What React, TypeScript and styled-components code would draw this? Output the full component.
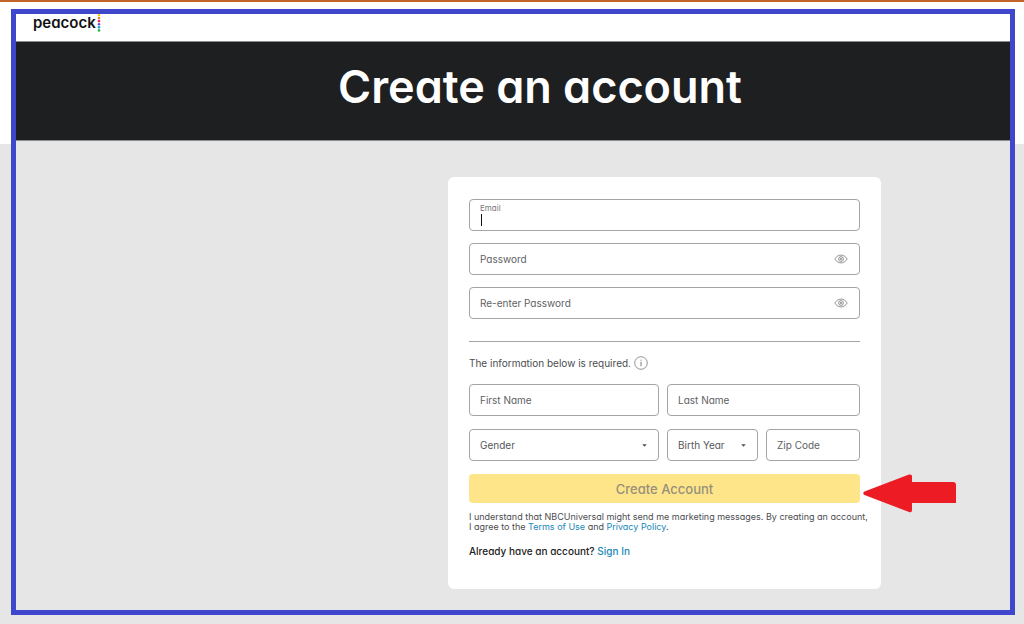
import React from "react";
import styled, { createGlobalStyle } from "styled-components";

const GlobalStyle = createGlobalStyle`
  *, *::before, *::after { box-sizing: border-box; }
  body {
    margin: 0;
    background: #e6e6e6;
    font-family: Inter, "Liberation Sans", sans-serif;
    font-feature-settings: "cv11" 1;
    color: #4c4d50;
  }
  input, select, button {
    font: inherit;
    font-feature-settings: inherit;
  }
`;

const Page = styled.div`
  min-height: 100vh;
  display: flex;
  flex-direction: column;
  border-top: 2px solid #c0642c;
  padding: 7px 9px 9px 11px;
  background: linear-gradient(#fff 142px, #e6e6e6 142px);
`;

const Frame = styled.div`
  flex: 1;
  display: flex;
  flex-direction: column;
  border: 5px solid #3f48cc;
  background: #e6e6e6;
`;

const Header = styled.header`
  height: 28px;
  display: flex;
  align-items: flex-start;
  gap: 1px;
  padding-left: 17px;
  background: #fff;
  border-bottom: 1px solid #8b8b8b;
`;

const Brand = styled.span`
  font-size: 15px;
  line-height: 18px;
  font-weight: 600;
  color: #111;
`;

const Banner = styled.div`
  height: 99px;
  display: flex;
  justify-content: center;
  padding: 16px 0 0 54px;
  background: #1e1f21;
  border-bottom: 1px solid #8b8b8b;
`;

const Title = styled.h1`
  margin: 0;
  font-size: 45px;
  line-height: 58px;
  font-weight: 600;
  color: #fff;
  white-space: nowrap;
`;

const Main = styled.main`
  flex: 1;
  display: flex;
  justify-content: flex-end;
  align-items: flex-start;
  padding: 36px 129px 21px 16px;
`;

const Card = styled.form`
  width: 433px;
  padding: 22px 21px 31px;
  border-radius: 6px;
  background: #fff;
`;

const Stack = styled.div`
  display: flex;
  flex-direction: column;
  gap: 12px;
`;

const Row = styled.div<{ $columns: string }>`
  display: grid;
  grid-template-columns: ${(p) => p.$columns};
  gap: 8px;
  margin-bottom: 13px;
`;

const Field = styled.div`
  position: relative;
  display: flex;
  align-items: center;
  min-width: 0;
  height: 32px;
  border: 1px solid #a3a4a6;
  border-radius: 4px;
  background: #fff;
`;

const Input = styled.input`
  flex: 1;
  min-width: 0;
  height: 100%;
  padding: 0 10px;
  border: 0;
  outline: 0;
  background: transparent;
  font-size: 10px;
  color: #222;
  &::placeholder { color: #606164; opacity: 1; }
`;

const Select = styled.select`
  flex: 1;
  min-width: 0;
  height: 100%;
  padding: 0 10px;
  border: 0;
  outline: 0;
  appearance: none;
  background: transparent;
  font-size: 10px;
  color: #56575a;
`;

const FloatingLabel = styled.label`
  position: absolute;
  top: 3px;
  left: 10px;
  font-size: 8px;
  line-height: 10px;
  color: #77787a;
`;

const Caret = styled.span`
  position: absolute;
  top: 14px;
  left: 11px;
  width: 1px;
  height: 12px;
  background: #111;
`;

const IconButton = styled.button`
  display: flex;
  margin-right: 11px;
  padding: 0;
  border: 0;
  background: none;
`;

const SelectArrow = styled.svg`
  position: absolute;
  right: 11px;
  pointer-events: none;
`;

const Divider = styled.hr`
  height: 1px;
  margin: 22px 0 11px;
  border: 0;
  background: #a3a4a6;
`;

const Notice = styled.p`
  display: flex;
  align-items: center;
  gap: 3px;
  height: 20px;
  margin: 0 0 11px;
  font-size: 10px;
`;

const SubmitArea = styled.div`
  position: relative;
`;

const Submit = styled.button`
  display: block;
  width: 100%;
  height: 29px;
  padding: 0;
  border: 0;
  border-radius: 4px;
  background: #ffe58a;
  color: #96907a;
  font-size: 13px;
  font-weight: 500;
`;

const Pointer = styled.svg`
  position: absolute;
  top: 0;
  left: calc(100% + 3px);
`;

const Legal = styled.p`
  margin: 9px 0 12px;
  font-size: 9px;
  line-height: 10px;
  white-space: nowrap;
`;

const SignIn = styled.p`
  margin: 0;
  font-size: 10px;
  line-height: 14px;
  font-weight: 500;
  color: #222;
`;

const Link = styled.a`
  color: #1a87b8;
  text-decoration: none;
`;

const dotColors = ["#fccc12", "#f58220", "#ee2e4a", "#6e55dc", "#1e9fe0", "#2fb457"];

function FeatherDots() {
  return (
    <svg width="4" height="18" viewBox="0 0 4 18" aria-hidden="true">
      {dotColors.map((color, i) => (
        <circle key={color} cx="2" cy={0.9 + i * 3.1} r="1.3" fill={color} />
      ))}
    </svg>
  );
}

function EyeIcon() {
  return (
    <svg width="14" height="10" viewBox="0 0 14 10" fill="none" stroke="#77787a" strokeWidth="0.8">
      <path d="M0.8 5C2.4 2.4 4.6 1.1 7 1.1S11.600 2.400 13.200 5C11.600 7.600 9.400 8.900 7 8.900S2.400 7.600 0.800 5Z" />
      <circle cx="7" cy="5" r="2.400" />
      <circle cx="7" cy="5" r="0.800" />
    </svg>
  );
}

function InfoIcon() {
  return (
    <svg width="14" height="14" viewBox="0 0 14 14" fill="none" stroke="#77787a">
      <circle cx="7" cy="7" r="6.300" strokeWidth="0.800" />
      <path d="M7 5.800V10.200M7 3.700V4.700" strokeWidth="1" />
    </svg>
  );
}

function Chevron() {
  return (
    <SelectArrow width="5" height="3" viewBox="0 0 5 3" aria-hidden="true">
      <path d="M0.300 0.300H4.700L2.500 2.700Z" fill="#4c4d50" />
    </SelectArrow>
  );
}

function PasswordField({ label }: { label: string }) {
  return (
    <Field>
      <Input type="password" placeholder={label} aria-label={label} />
      <IconButton type="button" aria-label={"Show " + label}>
        <EyeIcon />
      </IconButton>
    </Field>
  );
}

function TextField({ label }: { label: string }) {
  return (
    <Field>
      <Input type="text" placeholder={label} aria-label={label} />
    </Field>
  );
}

function SelectField({ label }: { label: string }) {
  return (
    <Field>
      <Select aria-label={label} defaultValue="">
        <option value="">{label}</option>
      </Select>
      <Chevron />
    </Field>
  );
}

export default function App() {
  return (
    <>
      <GlobalStyle />
      <Page>
        <Frame>
          <Header>
            <Brand>peacock</Brand>
            <FeatherDots />
          </Header>
          <Banner>
            <Title>Create an account</Title>
          </Banner>
          <Main>
            <Card>
              <Stack>
                <Field>
                  <FloatingLabel htmlFor="email">Email</FloatingLabel>
                  <Input id="email" type="email" />
                  <Caret />
                </Field>
                <PasswordField label="Password" />
                <PasswordField label="Re-enter Password" />
              </Stack>
              <Divider />
              <Notice>
                The information below is required.
                <InfoIcon />
              </Notice>
              <Row $columns="190fr 193fr">
                <TextField label="First Name" />
                <TextField label="Last Name" />
              </Row>
              <Row $columns="190fr 91fr 94fr">
                <SelectField label="Gender" />
                <SelectField label="Birth Year" />
                <TextField label="Zip Code" />
              </Row>
              <SubmitArea>
                <Submit type="button">Create Account</Submit>
                <Pointer width="94" height="39" viewBox="0 0 94 39" aria-hidden="true">
                  <path
                    d="M1.500 17.500L46 0.500Q49 0 49 2V8H90Q93 8 93 11V29H49V36Q49 39 46 38L1.500 21Q-1 19.200 1.500 17.500Z"
                    fill="#ed1c24"
                  />
                </Pointer>
              </SubmitArea>
              <Legal>
                I understand that NBCUniversal might send me marketing messages. By creating an account,
                <br />I agree to the <Link href="#terms">Terms of Use</Link> and{" "}
                <Link href="#privacy">Privacy Policy</Link>.
              </Legal>
              <SignIn>
                Already have an account? <Link href="#signin">Sign In</Link>
              </SignIn>
            </Card>
          </Main>
        </Frame>
      </Page>
    </>
  );
}
